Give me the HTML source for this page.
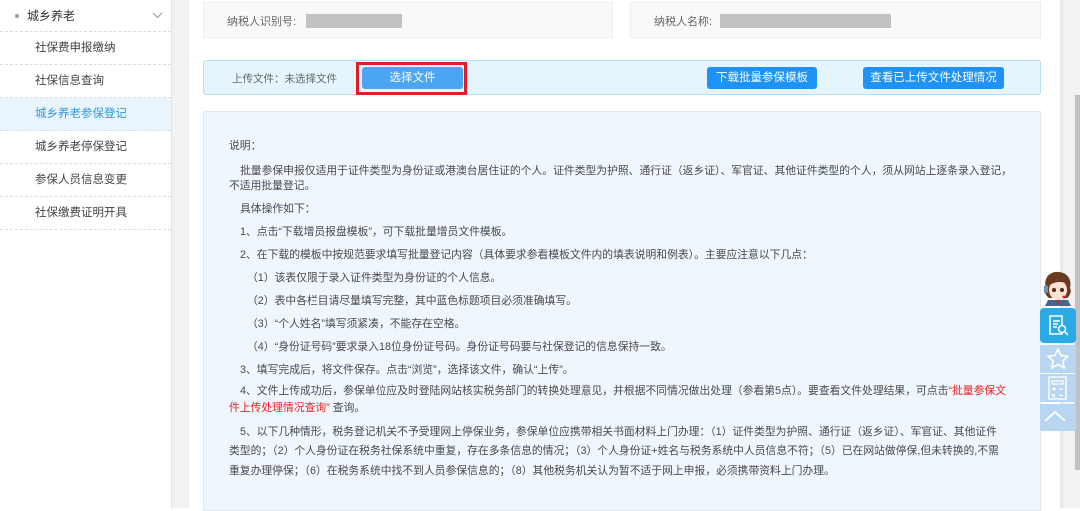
<!DOCTYPE html>
<html><head><meta charset="utf-8"><style>
*{margin:0;padding:0;box-sizing:border-box}
body{width:1080px;height:508px;overflow:hidden;background:#fff;font-family:"Liberation Sans","Noto Sans CJK SC",sans-serif;color:#555;position:relative}
.a{position:absolute}
.side{left:0;top:0;width:172px;height:508px;background:#fff;border-right:1px solid #e2e2e2}
.it{position:absolute;left:0;width:171px;height:33px;line-height:33px;padding-left:35px;font-size:11.5px;color:#444;border-bottom:1px dashed #ddd}
.gap{left:172px;top:0;width:17px;height:508px;background:#f2f2f2}
.box{background:#f9f9f9;border:1px solid #eee}
.btn{background:#1e92f5;color:#fff;font-size:11.5px;text-align:center;line-height:22px;border-radius:3px;height:22px;top:67px}
.t{position:absolute;font-size:10.8px;color:#4a4a4a;white-space:nowrap;line-height:14px;letter-spacing:0px}
.fb{left:1040px;width:36px;background:#b8d6f1}
</style></head><body>
<div class="a side">
 <div class="it" style="top:0;height:32px;line-height:32px;padding-left:27px;color:#333;font-size:12px"><span style="position:absolute;left:15px;top:14px;width:4px;height:4px;border-radius:50%;background:#999"></span>城乡养老
 <svg style="position:absolute;left:152px;top:12px" width="11" height="7"><path d="M1 1l4.5 4.5L10 1" fill="none" stroke="#999" stroke-width="1.1"/></svg></div>
 <div class="it" style="top:32px">社保费申报缴纳</div>
 <div class="it" style="top:65px">社保信息查询</div>
 <div class="it" style="top:98px;background:#eaf4fc;color:#2a9be0">城乡养老参保登记</div>
 <div class="it" style="top:131px">城乡养老停保登记</div>
 <div class="it" style="top:164px">参保人员信息变更</div>
 <div class="it" style="top:197px">社保缴费证明开具</div>
</div>
<div class="a gap"></div>
<div class="a" style="left:1060px;top:0;width:3px;height:508px;background:#e8e8e8"></div>
<div class="a" style="left:1063px;top:0;width:17px;height:508px;background:#f2f2f2"></div>
<div class="a" style="left:1075px;top:95px;width:5px;height:375px;background:#c1c1c1"></div>

<div class="a box" style="left:203px;top:2px;width:410px;height:36px"></div>
<div class="a" style="left:227px;top:13px;font-size:11px;color:#666">纳税人识别号:</div>
<div class="a" style="left:306px;top:14px;width:96px;height:14px;background:#c2c2c2"></div>
<div class="a box" style="left:630px;top:2px;width:411px;height:36px"></div>
<div class="a" style="left:654px;top:13px;font-size:11px;color:#666">纳税人名称:</div>
<div class="a" style="left:720px;top:14px;width:171px;height:14px;background:#c2c2c2"></div>

<div class="a" style="left:203px;top:60px;width:838px;height:35px;background:#e5f4fd;border:1px solid #b9dff8;border-radius:3px"></div>
<div class="a" style="left:232px;top:71px;font-size:10.5px;color:#666">上传文件：未选择文件</div>
<div class="a" style="left:356px;top:62px;width:111px;height:33px;border:3px solid #e01e26"></div>
<div class="a btn" style="left:362px;width:101px;background:#4ba5f2">选择文件</div>
<div class="a btn" style="left:707px;width:110px">下载批量参保模板</div>
<div class="a btn" style="left:863px;width:141px">查看已上传文件处理情况</div>

<div class="a" style="left:203px;top:111px;width:838px;height:400px;background:#eef6fe;border:1px solid #dfe7ef"></div>
<div class="t" style="left:229px;top:139px">说明：</div>
<div class="t" style="left:240px;top:164px">批量参保申报仅适用于证件类型为身份证或港澳台居住证的个人。证件类型为护照、通行证（返乡证）、军官证、其他证件类型的个人，须从网站上逐条录入登记，</div>
<div class="t" style="left:229px;top:179px">不适用批量登记。</div>
<div class="t" style="left:240px;top:202px">具体操作如下：</div>
<div class="t" style="left:240px;top:225px">1、点击“下载增员报盘模板”，可下载批量增员文件模板。</div>
<div class="t" style="left:240px;top:248px">2、在下载的模板中按规范要求填写批量登记内容（具体要求参看模板文件内的填表说明和例表）。主要应注意以下几点：</div>
<div class="t" style="left:247px;top:271px">（1）该表仅限于录入证件类型为身份证的个人信息。</div>
<div class="t" style="left:247px;top:294px">（2）表中各栏目请尽量填写完整，其中蓝色标题项目必须准确填写。</div>
<div class="t" style="left:247px;top:317px">（3）“个人姓名”填写须紧凑，不能存在空格。</div>
<div class="t" style="left:247px;top:340px">（4）“身份证号码”要求录入18位身份证号码。身份证号码要与社保登记的信息保持一致。</div>
<div class="t" style="left:240px;top:363px">3、填写完成后，将文件保存。点击“浏览”，选择该文件，确认“上传”。</div>
<div class="t" style="left:240px;top:384px">4、文件上传成功后，参保单位应及时登陆网站核实税务部门的转换处理意见，并根据不同情况做出处理（参看第5点）。要查看文件处理结果，可点击<span style="color:#f02020">“批量参保文</span></div>
<div class="t" style="left:229px;top:401px"><span style="color:#f02020">件上传处理情况查询”</span> 查询。</div>
<div class="t" style="left:240px;top:425px">5、以下几种情形，税务登记机关不予受理网上停保业务，参保单位应携带相关书面材料上门办理：（1）证件类型为护照、通行证（返乡证）、军官证、其他证件</div>
<div class="t" style="left:229px;top:444px">类型的；（2）个人身份证在税务社保系统中重复，存在多条信息的情况；（3）个人身份证+姓名与税务系统中人员信息不符；（5）已在网站做停保,但未转换的,不需</div>
<div class="t" style="left:229px;top:464px">重复办理停保；（6）在税务系统中找不到人员参保信息的；（8）其他税务机关认为暂不适于网上申报，必须携带资料上门办理。</div>

<svg class="a" style="left:1040px;top:268px" width="36" height="38" viewBox="0 0 36 38">
<path d="M6 20c-3-10 4-17 13-16 9 1 13 8 11 16 2 3 0 8-3 10H9c-3-2-5-6-3-10z" fill="#6b3a22"/>
<ellipse cx="18" cy="22" rx="9" ry="10" fill="#fbe3d2"/>
<path d="M8 18c3-8 15-10 20-2-6-3-13-3-20 2z" fill="#6b3a22"/>
<circle cx="14" cy="22" r="2" fill="#4a2a1a"/><circle cx="22" cy="22" r="2" fill="#4a2a1a"/>
<path d="M4 18a3 4 0 0 1 4 0v7H4z" fill="#6f8fb0"/>
<path d="M8 32h20l3 6H5z" fill="#45658a"/><path d="M17 32h3l-1 6z" fill="#d22"/>
<circle cx="24" cy="29" r="1.5" fill="#d22"/>
</svg>
<div class="a fb" style="top:308px;height:35px;background:#2aabe6;border-radius:4px"></div>
<svg class="a" style="left:1048px;top:314px" width="22" height="24"><path d="M2 2h12v18H2z M5 7h7M5 10h5M5 13h4" fill="none" stroke="#fff" stroke-width="1.5"/><circle cx="14" cy="15" r="3.5" fill="#2aabe6" stroke="#fff" stroke-width="1.5"/><path d="M16.5 17.5l3.5 3.5" stroke="#fff" stroke-width="1.5"/></svg>
<div class="a fb" style="top:345px;height:28px"></div>
<svg class="a" style="left:1046px;top:347px" width="24" height="24"><path d="M12 2l3 6.5 7 .8-5.2 4.8 1.5 7L12 17.5 5.7 21l1.5-7L2 9.3l7-.8z" fill="none" stroke="#fff" stroke-width="1.6" stroke-linejoin="round"/></svg>
<div class="a fb" style="top:374px;height:28px"></div>
<svg class="a" style="left:1047px;top:376px" width="22" height="24"><rect x="2" y="1" width="17" height="22" fill="none" stroke="#fff" stroke-width="1.4"/><path d="M5 5h11v3H5z M5 13h4M7 11v4M12 13h4M5 18l3 3M8 18l-3 3M12 19.5h4" fill="none" stroke="#fff" stroke-width="1.2"/></svg>
<div class="a fb" style="top:404px;height:27px"></div>
<svg class="a" style="left:1043px;top:408px" width="24" height="16"><path d="M2 13L12 4l10 9" fill="none" stroke="#fff" stroke-width="1.8"/></svg>
</body></html>
